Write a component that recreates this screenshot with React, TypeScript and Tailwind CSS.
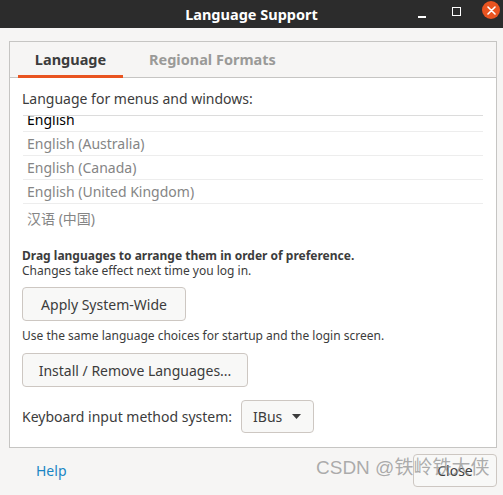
import React from 'react';

const languages = ['English (Australia)', 'English (Canada)', 'English (United Kingdom)'];

export default function App() {
  return (
    <div
      className="relative w-[503px] h-[495px] bg-[#f6f5f4] text-[#3c3c3c] flex flex-col overflow-hidden"
      style={{ fontFamily: '"Noto Sans", "Noto Sans CJK SC", sans-serif' }}
    >
      {/* title bar */}
      <div className="relative h-[28px] bg-[#2c2c2c] flex items-center justify-center shrink-0">
        <span className="text-white font-bold text-[14.5px] leading-none">Language Support</span>
        <div className="absolute right-[3px] top-[1px] flex items-center">
          <div className="w-[8px] h-[2px] bg-white mt-[14px] mr-[26px]" />
          <div className="w-[9px] h-[9px] border-[1.5px] border-white mt-[3px] mr-[21px]" />
          <div className="w-[18px] h-[18px] rounded-full bg-[#e95420] flex items-center justify-center">
            <svg width="9" height="9" viewBox="0 0 9 9">
              <path d="M1 1 L8 8 M8 1 L1 8" stroke="white" strokeWidth="1.6" strokeLinecap="round" />
            </svg>
          </div>
        </div>
      </div>

      {/* notebook frame */}
      <div className="ml-[9px] mt-[13px] w-[488px] h-[407px] border border-[#c6c5c3] flex flex-col shrink-0">
        <div className="h-[36px] bg-[#f6f5f4] border-b border-[#c6c5c3] flex items-stretch pl-[8px] shrink-0">
          <div className="w-[105px] flex items-center justify-center relative">
            <span className="font-bold text-[14.5px] text-[#3c3c3c]">Language</span>
            <div className="absolute left-0 right-0 bottom-[-1px] h-[3px] bg-[#e95420]" />
          </div>
          <div className="ml-[8px] px-[18px] flex items-center">
            <span className="font-bold text-[14.5px] text-[#9a9a98]">Regional Formats</span>
          </div>
        </div>

        <div className="flex-1 bg-white px-[12px] flex flex-col">
          <div className="mt-[11px] h-[20px] text-[14px] leading-[20px]">Language for menus and windows:</div>

          <div className="mt-[6px] h-[118px] overflow-hidden border-t border-[#dcdcdc] mx-[1px]">
            <div className="-mt-[8px] flex flex-col">
              <div className="h-[24px] flex items-center px-[4px] border-b border-[#ededed] text-[14px] text-black">
                English
              </div>
              {languages.map((l) => (
                <div
                  key={l}
                  className="h-[24px] flex items-center px-[4px] border-b border-[#ededed] text-[14px] text-[#858585]"
                >
                  {l}
                </div>
              ))}
              <div className="h-[28px] flex items-center px-[4px] text-[14px] text-[#858585]">汉语 (中国)</div>
            </div>
          </div>

          <div className="mt-[15px] text-[12px] leading-[15px] font-bold">
            Drag languages to arrange them in order of preference.
          </div>
          <div className="text-[12px] leading-[15px]">Changes take effect next time you log in.</div>

          <button className="mt-[9px] w-[164px] h-[34px] rounded-[4px] border border-[#cdc7c2] bg-[#f8f8f7] text-[14px] text-[#3c3c3c]">
            Apply System-Wide
          </button>
          <div className="mt-[7px] text-[12px] leading-[15px]">
            Use the same language choices for startup and the login screen.
          </div>

          <button className="mt-[10px] w-[226px] h-[34px] rounded-[4px] border border-[#cdc7c2] bg-[#f8f8f7] text-[14px] text-[#3c3c3c]">
            Install / Remove Languages...
          </button>

          <div className="mt-[13px] flex items-center">
            <span className="text-[14px] mr-[9px]">Keyboard input method system:</span>
            <div className="w-[73px] h-[33px] rounded-[4px] border border-[#cdc7c2] bg-[#f8f8f7] flex items-center pl-[11px] pr-[12px] justify-between">
              <span className="text-[14px]">IBus</span>
              <svg width="9" height="5" viewBox="0 0 9 5">
                <path d="M0 0 L9 0 L4.5 5 Z" fill="#3c3c3c" />
              </svg>
            </div>
          </div>
        </div>
      </div>

      {/* bottom buttons */}
      <div className="flex items-center justify-between mt-[6px] pl-[36px] pr-[6px]">
        <span className="text-[#1a85c4] text-[14px]">Help</span>
        <button className="w-[84px] h-[33px] rounded-[4px] border border-[#cdc7c2] bg-[#f8f8f7] text-[14px] text-[#3c3c3c]">
          Close
        </button>
      </div>

      {/* watermark */}
      <div
        className="absolute left-[316px] top-[458px] text-[19px] text-[#8a8a8a]/70 leading-none whitespace-nowrap"
        style={{ fontFamily: '"Liberation Sans", "Noto Sans CJK SC", sans-serif' }}
      >
        CSDN @铁岭铁大侠
      </div>
    </div>
  );
}
